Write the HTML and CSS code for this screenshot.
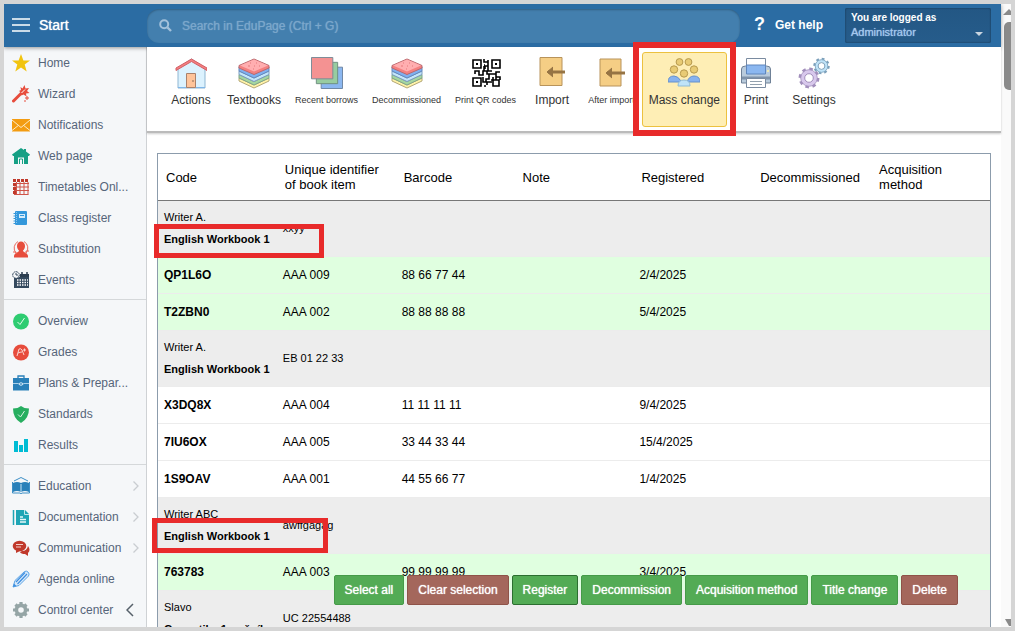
FILE: index.html
```html
<!DOCTYPE html>
<html lang="en">
<head>
  <meta charset="UTF-8" />
  <meta name="viewport" content="width=device-width, initial-scale=1.0"/>
  <title>EduPage - Textbooks</title>
  <link rel="stylesheet" href="styles.css">
</head>
<body>
  <svg class="defs" width="0" height="0">
    <symbol id="books" viewBox="0 0 32 32">
      <path d="M1 21v3l15 7 15-7v-3l-15 7z" fill="#fff3a8" stroke="#b5a878"/>
      <path d="M1 17.500v3.500l15 7 15-7v-3.500l-15 7z" fill="#a5d6a0" stroke="#7fa58a"/>
      <path d="M1 14v3.500l15 7 15-7V14l-15 7z" fill="#c4e6fa" stroke="#7b9cc0"/>
      <path d="M1 10v4l15 7 15-7v-4l-15 7z" fill="#7fb0f0" stroke="#6489bd"/>
      <path d="M1 8.500 16 2l15 6.500V11l-15 6.500L1 11z" fill="#f48080" stroke="#b96a70"/>
      <path d="M2 8.500 16 2.500l14 6-14 6z" fill="#ffaeb0"/>
      <path d="M12 6h1M18 6h1M10 9h2M16 9h1M21 9h1M15 12h1" stroke="#e5787c"/>
    </symbol>
    <symbol id="chevron" viewBox="0 0 8 12">
      <path d="m1.500 1.500 4.500 4.500-4.500 4.500" fill="none" stroke="currentColor" stroke-width="1.300"/>
    </symbol>
  </svg>

  <div class="app">
    <div class="page">
      <header class="topbar">
        <button class="menu-btn">
          <svg width="18" height="14" viewBox="0 0 18 14"><path d="M0 1h18M0 7h18M0 13h18" stroke="#fff" stroke-width="1.500"/></svg>
          Start
        </button>
        <label class="search">
          <svg width="13" height="13" viewBox="0 0 13 13"><circle cx="5.200" cy="5.200" r="4" fill="none" stroke="#a3c1db" stroke-width="2"/><path d="m8.500 8.500 3.500 3.500" stroke="#a3c1db" stroke-width="2.400"/></svg>
          <input type="text" placeholder="Search in EduPage (Ctrl + G)" aria-label="Search in EduPage">
        </label>
        <button class="help-btn"><span class="question">?</span>Get help</button>
        <button class="login">
          <b>You are logged as</b>
          <span>Administrator</span>
        </button>
      </header>

      <div class="body">
        <nav class="sidebar">
          <div class="group">
            <a href="#"><svg viewBox="0 0 18 18"><path d="m9 0 2.400 6.400H18l-5.300 4.200 2 6.900L9 13.400l-5.700 4.100 2-6.900L0 6.400h6.600z" fill="#f1c40f"/></svg>Home</a>
            <a href="#"><svg viewBox="0 0 18 18"><path d="m1.500 16 8-8" stroke="#e74c3c" stroke-width="3" stroke-linecap="round"/><path d="m8.500 2 2 1.500L12.500 0l1 3.500L17 3l-2 3 2.500 2-3.500.500.500 3-3-2-2 1-.500-3-2-1.500 2-1z" fill="#e74c3c"/><path d="m9.500 8 3.500-3.500" stroke="#fff"/><path d="M15 11v4M13 13h4M12 16h2" stroke="#e74c3c"/></svg>Wizard</a>
            <a href="#"><svg viewBox="0 0 18 18"><path d="M0 3h18v12.500H0z" fill="#f39c12"/><path d="m0 4 9 7.500L18 4M0 14.500l6.300-5M18 14.500l-6.300-5" fill="none" stroke="#fdebc8"/></svg>Notifications</a>
            <a href="#"><svg viewBox="0 0 18 18"><path d="M9 1 0 7.500l1 1.500h1v8h4v-6.500h6V17h4V9h1l1-1.500L14 4.500V2h-2v1z" fill="#16a085"/><path d="M7.500 17v-5h3v5" fill="none" stroke="#16a085"/></svg>Web page</a>
            <a href="#"><svg viewBox="0 0 18 18"><path d="M4.500 4v12.500M8 4v12.500M12 4v12.500M16 4v12.500M2 5.500h15M2 9h15M2 12.500h15M2 16.500h14.500" stroke="#cf5348"/><path d="M1 2.500h16" stroke="#c0392b" stroke-width="3" stroke-dasharray="3 1"/><path d="M2.500 5v12" stroke="#c0392b" stroke-width="3" stroke-dasharray="3 1"/></svg>Timetables Onl...</a>
            <a href="#"><svg viewBox="0 0 18 18"><rect x="3" y="2" width="12" height="14" rx="1" fill="#3498db"/><path d="M3 4v11" stroke="#3498db" stroke-width="3" stroke-dasharray="1 1.500"/><path d="M4.500 3v12" stroke="#86c3ee" stroke-dasharray="1 1"/><path d="M7 5h6v4H7z" fill="#d4ecfb"/><path d="M8 6.500h4" stroke="#3498db"/></svg>Class register</a>
            <a href="#"><svg viewBox="0 0 18 18"><path d="M5 6c0-6 8-6 8 0 0 2-1 3.500-2 4.500 0 2 5 2.500 5 5.500v1.500H2V16c0-3 5-3.500 5-5.500C6 9.500 5 8 5 6" fill="#e74c3c"/><path d="M4 13A7.500 7.500 0 0 1 6 1.500M12 1.500A7.500 7.500 0 0 1 14 13M1 12h3v2M17 11h-3v3" fill="none" stroke="#ea6a5d"/></svg>Substitution</a>
            <a href="#"><svg viewBox="0 0 18 18"><path d="M2 6h15v11H2z" fill="#34495e"/><path d="M8 3h9v3H8z" fill="#2c3e50"/><path d="M10 1v3M15 1v3" stroke="#2c3e50" stroke-width="1.500"/><path d="M5 9h11M5 11.500h11M5 14h11" stroke="#fff" stroke-width="1.500" stroke-dasharray="1.500 1"/><circle cx="4" cy="4" r="3.300" fill="#f5f7f9" stroke="#34495e" stroke-dasharray="2 .500"/><path d="M4 2v2h2" fill="none" stroke="#34495e"/></svg>Events</a>
          </div>
          <div class="group">
            <a href="#"><svg viewBox="0 0 18 18"><circle cx="9" cy="9.500" r="8" fill="#2ecc71"/><path d="m5.500 10 2.500 2.500L12.500 6" fill="none" stroke="#e4fbed"/></svg>Overview</a>
            <a href="#"><svg viewBox="0 0 18 18"><circle cx="9" cy="9.500" r="8" fill="#e74c3c"/><path d="M5 13 7 6q2-1 3 1l2 5M6 10q2-1 4-1M11 7h3M12.500 5.500v3" fill="none" stroke="#fbd5d0"/></svg>Grades</a>
            <a href="#"><svg viewBox="0 0 18 18"><path d="M6 4V2h6v2" fill="none" stroke="#2980b9" stroke-width="1.300"/><path d="M1 4h16v12.500H1z" fill="#2980b9"/><path d="M1 9.500h5l3 1.500 3-1.500h5" fill="none" stroke="#a9d0ea"/><ellipse cx="9" cy="10" rx="1.800" ry="1.200" fill="#2980b9" stroke="#d4e8f6"/></svg>Plans &amp; Prepar...</a>
            <a href="#"><svg viewBox="0 0 18 18"><path d="M9 1q3 2.500 8 2.500 0 10-8 14.500-8-4.500-8-14.500Q6 3.500 9 1" fill="#27ae60"/><path d="m6 9.500 2.500 2.500L12.500 6" fill="none" stroke="#d7f2e2"/></svg>Standards</a>
            <a href="#"><svg viewBox="0 0 18 18"><path d="M2 5h4v11H2zM7 9h4v7H7zM12 3h4v13h-4z" fill="#00bcd4"/></svg>Results</a>
          </div>
          <div class="group">
            <a href="#"><svg viewBox="0 0 18 18"><path d="M1 6q4-2 8 0v9q-4-2-8 0zM9 6q4-2 8 0v9q-4-2-8 0z" fill="#2980b9"/><path d="M.500 5v11h7.500q1 1.500 2 0h7.500V5M2 4l7-3.500L16 4M9 7v8" fill="none" stroke="#3d8fc6"/><path d="M9 7v8" stroke="#bfdcef"/></svg>Education<svg class="arrow"><use href="#chevron"/></svg></a>
            <a href="#"><svg viewBox="0 0 18 18"><path d="M1.500 2v15" stroke="#1fa5b5" stroke-width="1.500"/><path d="M4 2h9l4 4v11H4z" fill="#1fa5b5"/><path d="M12.500 2v4.500H17" fill="none" stroke="#bfe7eb"/><path d="M8 9h3M8 11.500h6M8 14h6" stroke="#e9f8f9" stroke-width="1.300"/></svg>Documentation<svg class="arrow"><use href="#chevron"/></svg></a>
            <a href="#"><svg viewBox="0 0 18 18"><ellipse cx="7.500" cy="7" rx="6.800" ry="5.200" fill="#c0392b"/><path d="M4 11v3l4-2zM10 12q5 0 6-5 3 4 0 7v3l-3-2q-4 0-5-2z" fill="#c0392b"/><path d="M4 5.500h7M4 8h5" stroke="#f3cfca"/></svg>Communication<svg class="arrow"><use href="#chevron"/></svg></a>
            <a href="#"><svg viewBox="0 0 18 18"><path d="m1 17 2-6.500L12.500 1.500q2-1 3.500.500 2 2 .500 4L7 15.500z" fill="#d9eafa" stroke="#5aa4e6"/><path d="m4 12 9-9.500M5.500 14l9.500-10" stroke="#3d8ee0" stroke-width="1.200"/><path d="m1 17 3.500-1-2.500-2.500z" fill="#3d8ee0"/></svg>Agenda online</a>
            <a href="#"><svg viewBox="0 0 18 18"><path d="M9 1v16M1 9h16M3.500 3.500l11 11M14.500 3.500l-11 11" stroke="#95a5a6" stroke-width="3.200"/><circle cx="9" cy="9" r="4.600" fill="#f5f7f9" stroke="#95a5a6" stroke-width="3.600"/></svg>Control center<svg class="arrow collapse" viewBox="0 0 8 14"><path d="M7 1 1 7l6 6" fill="none" stroke="currentColor" stroke-width="1.500"/></svg></a>
          </div>
        </nav>

        <main class="content">
          <div class="toolbar">
            <button class="tool">
              <svg viewBox="0 0 32 32"><path d="M3 11v20h27V11L16.500 2z" fill="#dcf2fe" stroke="#8fb6d2"/><path d="M3 30.500h27" stroke="#7fb6e8"/><path d="M11.500 16.500h9v14h-9z" fill="#ffc49a" stroke="#a9826c"/><path d="M19 24h-2" stroke="#8d6a55"/><path d="m1 11 15.500-9L32 11v2.500L16.500 4.500 1 13.500z" fill="#f48080" stroke="#d35f66"/></svg>
              <span>Actions</span>
            </button>
            <button class="tool"><svg><use href="#books"/></svg><span>Textbooks</span></button>
            <button class="tool small">
              <svg viewBox="0 0 33 33"><path d="M10.500 10.500h22v22h-22z" fill="#8bb7f0" stroke="#6e86a3"/><path d="M5.500 5.500h22v22h-22z" fill="#98cca0" stroke="#6e9080"/><path d="M.500.500h22v22H.500z" fill="#f49292" stroke="#7a8a96"/></svg>
              <span>Recent borrows</span>
            </button>
            <button class="tool small"><svg><use href="#books"/></svg><span>Decommissioned</span></button>
            <button class="tool small">
              <svg viewBox="0 0 32 32"><g fill="none" stroke="#000" stroke-width="1.600"><path d="M3 3h8v8H3zM22 3h8v8h-8zM3 21h8v8H3z"/><path d="M14 2v3h4v4h-3v3M18 3v2M14 8h1M18 9v5h4M5 17v-3h4v4h4v-4h4v3h9v-2h4M14 9v5M19 17v5h-3v3h-3v-5M17 28v-3h5M23 20v9h6v-6h-8M26 20h4v3M26 17v6M14 29h2"/></g><path d="M6 6h2v2H6zM25 6h2v2h-2zM6 24h2v2H6z"/></svg>
              <span>Print QR codes</span>
            </button>
            <button class="tool">
              <svg viewBox="0 0 32 32"><path d="M4 .500h22v28H4z" fill="#f5ce85" stroke="#b8935a"/><path d="M12 15h17" stroke="#967444" stroke-width="3"/><path d="m17 10-6 5 6 5" fill="#967444" stroke="#967444"/></svg>
              <span>Import</span>
            </button>
            <button class="tool small">
              <svg viewBox="0 0 32 32"><path d="M5 2h21v27H5z" fill="#f5ce85" stroke="#b8935a"/><path d="M12 16h18" stroke="#967444" stroke-width="3"/><path d="m17 11-6 5 6 5" fill="#967444" stroke="#967444"/></svg>
              <span>After import</span>
            </button>
            <button class="tool active">
              <svg viewBox="0 0 32 32"><g fill="#e8cb74" stroke="#b79a4e"><circle cx="11.500" cy="5" r="3.400"/><circle cx="20.500" cy="5" r="3.400"/><circle cx="6" cy="12.500" r="3.700"/><circle cx="26" cy="12.500" r="3.700"/><circle cx="16" cy="16.500" r="3.700"/></g><path d="M0 25q0-6 6-6 4 0 7 5v1zM19 25q2-6 7-6 6 0 6 6z" fill="#86b2ef" stroke="#6590cd"/><path d="M10 29q0-6 6-6t6 6z" fill="#bfe3f8" stroke="#8ebbd6"/></svg>
              <span>Mass change</span>
              <i class="mark mark-tool"></i>
            </button>
            <button class="tool">
              <svg viewBox="0 0 32 32"><path d="M6.500 1.500h19V10h-19z" fill="#fff" stroke="#7a8ba0"/><path d="M1.500 12q0-3 4-3h21q4 0 4 3v14h-29z" fill="#b9cbdc" stroke="#6f8197"/><path d="M6.500 8h19v9h-19z" fill="#8bb7f0" stroke="#5f86bd"/><circle cx="28" cy="14" r="1" fill="#fff3a8"/><path d="M2 21h28" stroke="#7f93aa" stroke-width="3"/><path d="M6.500 21.500h19v9h-19z" fill="#fff" stroke="#7a8ba0"/><path d="M10 24.500h12M10 27.500h12" stroke="#92a0ad"/></svg>
              <span>Print</span>
            </button>
            <button class="tool">
              <svg viewBox="0 0 32 32"><g fill="none" stroke="#a18ebb"><circle cx="11" cy="21" r="8.700" stroke-width="3.500" stroke-dasharray="3.400 3.430"/><circle cx="11" cy="21" r="6.200" stroke="#d8c8ec" stroke-width="4"/><circle cx="11" cy="21" r="8.300" stroke-width=".8"/><circle cx="11" cy="21" r="4.300" fill="#fff"/></g><g fill="none" stroke="#7b9fba"><circle cx="23.500" cy="9" r="7" stroke-width="2.500" stroke-dasharray="2.700 2.800"/><circle cx="23.500" cy="9" r="5" stroke="#bfe3f8" stroke-width="3"/><circle cx="23.500" cy="9" r="6.300" stroke-width=".8"/><circle cx="23.500" cy="9" r="3.400" fill="#fff"/></g></svg>
              <span>Settings</span>
            </button>
          </div>

          <table class="books">
            <thead>
              <tr><th>Code</th><th>Unique identifier of book item</th><th>Barcode</th><th>Note</th><th>Registered</th><th>Decommissioned</th><th>Acquisition method</th></tr>
            </thead>
            <tbody>
              <tr class="title"><td>Writer A.<b>English Workbook 1</b><i class="mark mark-first"></i></td><td>xxyy</td><td colspan="5"></td></tr>
              <tr class="selected"><td>QP1L6O</td><td>AAA 009</td><td>88 66 77 44</td><td></td><td>2/4/2025</td><td></td><td></td></tr>
              <tr class="selected"><td>T2ZBN0</td><td>AAA 002</td><td>88 88 88 88</td><td></td><td>5/4/2025</td><td></td><td></td></tr>
              <tr class="title"><td>Writer A.<b>English Workbook 1</b></td><td>EB 01 22 33</td><td colspan="5"></td></tr>
              <tr><td>X3DQ8X</td><td>AAA 004</td><td>11 11 11 11</td><td></td><td>9/4/2025</td><td></td><td></td></tr>
              <tr><td>7IU6OX</td><td>AAA 005</td><td>33 44 33 44</td><td></td><td>15/4/2025</td><td></td><td></td></tr>
              <tr><td>1S9OAV</td><td>AAA 001</td><td>44 55 66 77</td><td></td><td>1/4/2025</td><td></td><td></td></tr>
              <tr class="title"><td>Writer ABC<b>English Workbook 1</b><i class="mark mark-second"></i></td><td>awffgagag</td><td colspan="5"></td></tr>
              <tr class="selected"><td>763783</td><td>AAA 003</td><td>99 99 99 99</td><td></td><td>3/4/2025</td><td></td><td></td></tr>
              <tr class="title"><td>Slavo<b>Gramatika 1. ročník</b></td><td>UC 22554488</td><td colspan="5"></td></tr>
            </tbody>
          </table>

          <div class="bulk-actions">
            <button>Select all</button>
            <button class="red">Clear selection</button>
            <button class="focus">Register</button>
            <button>Decommission</button>
            <button>Acquisition method</button>
            <button>Title change</button>
            <button class="red">Delete</button>
          </div>
        </main>
      </div>
    </div>

    <div class="scrollbar">
      <svg width="12" height="6" viewBox="0 0 12 6"><path d="m6 0 6 6H0z" fill="#8a8a8a"/></svg>
      <div class="thumb"></div>
      <svg width="12" height="7" viewBox="0 0 12 7"><path d="M2 0h10L8 7H6z" fill="#8a8a8a"/></svg>
    </div>
  </div>
</body>
</html>
```

FILE: styles.css
```css
* {
  box-sizing: border-box;
}

body {
  margin: 0;
  padding: 4px;
  height: 100vh;
  overflow: hidden;
  background: #d5d5d5;
  font-family: "Liberation Sans", Arial, sans-serif;
  font-size: 12px;
  color: #000;
}

button, input {
  font-family: inherit;
  font-size: 12px;
  border: none;
  margin: 0;
}

button {
  cursor: pointer;
}

.defs {
  position: absolute;
}

.app {
  display: flex;
  height: 100%;
  overflow: hidden;
  background: #fff;
}

.page {
  flex: 1;
  display: flex;
  flex-direction: column;
  min-width: 0;
}

/* top bar */
.topbar {
  display: flex;
  align-items: center;
  flex-shrink: 0;
  height: 43px;
  padding: 0 10px 2px 0;
  background: #2b6ca3;
  color: #fff;
  box-shadow: 0 1px 4px rgba(0, 0, 0, 0.4);
  position: relative;
}

.menu-btn {
  display: flex;
  align-items: center;
  gap: 9px;
  width: 143px;
  padding: 0 8px;
  background: none;
  color: #fff;
  font-size: 14px;
  text-shadow: 0 0 1px #fff;
}

.search {
  flex: 1;
  display: flex;
  align-items: center;
  gap: 10px;
  height: 34px;
  margin-top: 2px;
  padding: 0 12px;
  border-radius: 12px;
  background: #437fae;
  box-shadow: inset 0 1px 2px rgba(0, 0, 0, 0.25);
}

.search input {
  flex: 1;
  padding: 0;
  outline: none;
  background: none;
  color: #fff;
}

.search input::placeholder {
  color: #7ba7cb;
  text-shadow: 0 0 1px #7ba7cb;
}

.help-btn {
  display: flex;
  align-items: center;
  gap: 10px;
  padding: 0 22px 0 14px;
  background: none;
  color: #fff;
  font-weight: bold;
}

.question {
  font-size: 18px;
}

.login {
  display: flex;
  flex-direction: column;
  width: 146px;
  height: 35px;
  margin-top: 2px;
  padding: 3px 6px;
  border-radius: 2px;
  background: linear-gradient(#235784, #265c8b);
  box-shadow: inset 0 0 2px rgba(0, 0, 0, 0.5);
  color: #fff;
  text-align: left;
  line-height: 15px;
  position: relative;
}

.login b {
  font-size: 10px;
  line-height: 14px;
}

.login span {
  font-size: 11px;
  color: #a5c8ee;
  text-shadow: 0 0 1px #a5c8ee;
}

.login::after {
  content: "";
  position: absolute;
  right: 8px;
  bottom: 7px;
  border: 4px solid transparent;
  border-top-color: #c9d5e0;
  border-bottom: none;
}

.body {
  flex: 1;
  display: flex;
  min-height: 0;
}

/* left menu */
.sidebar {
  width: 143px;
  flex-shrink: 0;
  overflow: hidden;
  background: #f5f7f9;
  border-right: 1px solid #cfd2d5;
}

.group {
  padding: 5px 0 4px;
  border-bottom: 1px solid #d5d8da;
}

.group:first-child {
  padding-top: 0;
}

.group:last-child {
  border-bottom: none;
}

.group a {
  display: flex;
  align-items: center;
  height: 31px;
  padding: 0 6px 0 8px;
  color: #56657a;
  text-decoration: none;
  white-space: nowrap;
}

.group svg {
  width: 18px;
  height: 18px;
  margin-right: 8px;
}

.group .arrow {
  width: 8px;
  height: 12px;
  margin: 0 0 0 auto;
  color: #c9cdd1;
}

.group .collapse {
  height: 14px;
  margin-right: 6px;
  color: #56606a;
}

/* toolbar */
.content {
  flex: 1;
  min-width: 0;
  position: relative;
}

.toolbar {
  display: flex;
  height: 86px;
  padding: 5px 15px;
  background: #fff;
  border-bottom: 2px solid #bbb;
  box-shadow: 0 1px 2px rgba(0, 0, 0, 0.2);
}

.tool {
  display: flex;
  flex-direction: column;
  align-items: center;
  gap: 4px;
  flex-shrink: 0;
  height: 75px;
  min-width: 58px;
  padding: 5px 7px;
  background: none;
  color: #333;
  line-height: 14px;
  white-space: nowrap;
  position: relative;
}

.tool svg {
  width: 32px;
  height: 32px;
}

.small {
  font-size: 9px;
}

.active {
  padding: 4px 6px;
  background: #feeeb5;
  border: 1px solid #ecc13f;
  border-radius: 3px;
}

/* red highlight frames */
.mark {
  position: absolute;
  z-index: 2;
  border: 5px solid #e82a2a;
  pointer-events: none;
}

.mark-tool {
  inset: -11px -10px -10px;
  border-width: 6px;
}

.mark-first {
  inset: 23px -47px -2px -4px;
}

.mark-second {
  inset: 20px -51px 0 -6px;
}

/* table of books */
.books {
  width: calc(100% - 20px);
  margin: 20px 10px 0;
  table-layout: fixed;
  border-collapse: separate;
  border-spacing: 0;
  border: 1px solid #8c9cac;
}

.books th {
  height: 47px;
  padding: 0 8px;
  border-bottom: 1px solid #777;
  font-size: 13px;
  font-weight: normal;
  line-height: 15px;
  text-align: left;
}

.books td {
  height: 37px;
  padding: 0 6px;
  border-bottom: 1px solid #ececec;
}

.books td:first-child {
  font-weight: bold;
  position: relative;
}

.books .selected td {
  background: #e0ffe0;
}

.books .title td {
  height: 56px;
  padding-bottom: 2px;
  background: #ededed;
  font-size: 11px;
  line-height: 22px;
}

.books .title td:first-child {
  font-weight: normal;
  white-space: nowrap;
}

.title b {
  display: block;
}

/* floating buttons at the bottom */
.bulk-actions {
  display: flex;
  gap: 3px;
  position: absolute;
  right: 43px;
  bottom: 22px;
}

.bulk-actions button {
  height: 30px;
  padding: 0 10px;
  border: 1px solid #459a48;
  border-radius: 2px;
  background: #53ab55;
  color: #fff;
  text-shadow: 0 0 1px #fff;
  white-space: nowrap;
}

.bulk-actions .red {
  background: #a4675c;
  border-color: #8f5349;
}

.bulk-actions .focus {
  border-color: #2c6e30;
}

/* window scrollbar */
.scrollbar {
  display: flex;
  flex-direction: column;
  gap: 7px;
  width: 10px;
  padding: 5px 0 1px 2px;
  overflow: hidden;
  background: #fafafa;
}

.scrollbar svg {
  flex-shrink: 0;
}

.scrollbar svg:last-child {
  margin-top: auto;
}

.thumb {
  width: 12px;
  height: 68px;
  margin-left: 1px;
  border-radius: 5px;
  background: #8a8a8a;
}
```
